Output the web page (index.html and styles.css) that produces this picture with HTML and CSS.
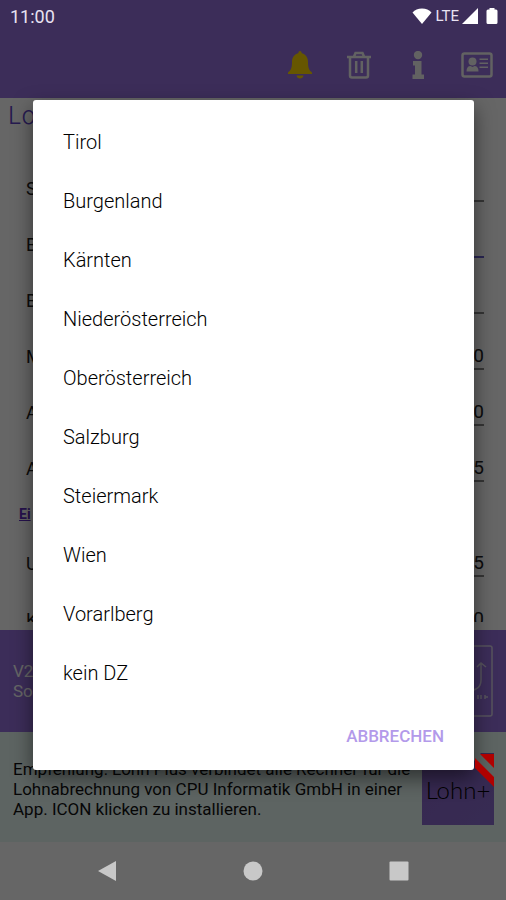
FILE: index.html
```html
<!DOCTYPE html>
<html lang="de">
<head>
<meta charset="utf-8">
<meta name="viewport" content="width=device-width, initial-scale=1">
<title>Lohn</title>
<link rel="stylesheet" href="styles.css">
</head>
<body>
<div class="screen">
  <header class="top">
    <div class="status">
      <span class="clock">11:00</span>
      <span class="signals">
        <svg width="20" height="18" viewBox="0 0 20 18"><path d="M10 17 .5 5.500Q4 1.500 10 1.500t9.500 4z"/></svg>
        <span class="lte">LTE</span>
        <svg width="16" height="18" viewBox="0 0 16 18"><path d="M16 1v16H0z"/></svg>
        <svg class="battery" width="12" height="18" viewBox="0 0 12 18"><path d="M3.500 1h5v1.500H10q1.500 0 1.500 1.500v11.500Q11.500 17 10 17H2Q.5 17 .5 15.500V4Q.5 2.500 2 2.500h1.500z"/></svg>
      </span>
    </div>
    <nav class="toolbar">
      <button class="tool bell" aria-label="Alarm"><svg width="26" height="28" viewBox="0 0 26 28"><path d="M13 0q1.500 0 1.800 2.300C19 3.500 21 7 21 11c0 6 1 8 4 10.500V23H1v-1.500C4 19 5 17 5 11c0-4 2-7.500 6.200-8.700Q11.500 0 13 0zM9.500 24.500h7q-.5 3-3.500 3t-3.500-3z"/></svg></button>
      <button class="tool" aria-label="Löschen"><svg width="26" height="28" viewBox="0 0 26 28" class="outline"><path d="M1 6h24M8 5.500 9.500 2h7L18 5.500M4 6v18.500q0 2 2 2h14q2 0 2-2V6M10.200 10v12M15.800 10v12"/></svg></button>
      <button class="tool" aria-label="Info"><svg width="26" height="28" viewBox="0 0 26 28"><circle cx="13" cy="4" r="4.200"/><path d="M8 10h8.500v13.500H19V28H7.500v-4.500H10v-9H8z"/></svg></button>
      <button class="tool card" aria-label="Kontakt"><svg width="32" height="28" viewBox="0 0 32 28"><rect class="frame" x="1.500" y="2.500" width="29" height="23" rx="2"/><circle cx="11.500" cy="10.500" r="4"/><path d="M5.500 20.500q0-5.500 4-5.500l2 1 2-1q4 0 4 5.500zM18.500 7.500H27V9h-8.500zM18.500 11.500H27V13h-8.500zM18.500 15.500H27V17h-8.500z"/></svg></button>
    </nav>
  </header>

  <main class="content">
    <h1>Lo</h1>
    <form class="form">
      <div class="row"><label for="f1">S</label><input id="f1"></div>
      <div class="row active"><label for="f2">B</label><input id="f2"></div>
      <div class="row"><label for="f3">B</label><input id="f3"></div>
      <div class="row"><label for="f4">M</label><input id="f4" value="0"></div>
      <div class="row"><label for="f5">A</label><input id="f5" value="0"></div>
      <div class="row"><label for="f6">A</label><input id="f6" value="5"></div>
      <a class="more" href="#">Ei</a>
      <div class="row"><label for="f7">U</label><input id="f7" value="5"></div>
      <div class="row"><label for="f8">K</label><input id="f8" value="0"></div>
    </form>
  </main>

  <section class="about">
    <p>V2<br>So</p>
    <svg width="72" height="72" viewBox="0 0 72 72"><rect x="1" y="1" width="70" height="70" rx="2"/><path d="M46 43q4 4 9 1 5-2 5-9V19m-4 3 4-4 5 4M57 50v4m3-4v4m4-4v4m0-2h3"/></svg>
  </section>

  <section class="promo">
    <p>Empfehlung: Lohn Plus verbindet alle Rechner für die Lohnabrechnung von CPU Informatik GmbH in einer App. ICON klicken zu installieren.</p>
    <a class="app" href="#">
      <svg width="72" height="72" viewBox="0 0 72 72" aria-hidden="true"><path class="white" d="M45 0h13l14 14v13z"/></svg>
      <svg class="ribbon" width="72" height="72" viewBox="0 0 72 72" aria-hidden="true"><path class="red" d="M58 1h14v14zM53 5l19 19v10L53 15z"/></svg>
      <span>Lohn+</span>
    </a>
  </section>

  <nav class="system">
    <button aria-label="Zurück"><svg width="20" height="22" viewBox="0 0 20 22"><path d="M19 1v20L1 11z"/></svg></button>
    <button aria-label="Start"><svg width="20" height="22" viewBox="0 0 20 22"><circle cx="10" cy="11" r="9.500"/></svg></button>
    <button aria-label="Übersicht"><svg width="20" height="22" viewBox="0 0 20 22"><rect x=".5" y="1.500" width="19" height="19" rx="1"/></svg></button>
  </nav>

  <div class="scrim">
    <div class="dialog" role="dialog" aria-label="Bundesland">
      <ul>
        <li><button>Tirol</button></li>
        <li><button>Burgenland</button></li>
        <li><button>Kärnten</button></li>
        <li><button>Niederösterreich</button></li>
        <li><button>Oberösterreich</button></li>
        <li><button>Salzburg</button></li>
        <li><button>Steiermark</button></li>
        <li><button>Wien</button></li>
        <li><button>Vorarlberg</button></li>
        <li><button>kein DZ</button></li>
      </ul>
      <div class="actions"><button>ABBRECHEN</button></div>
    </div>
  </div>
</div>
</body>
</html>
```
FILE: styles.css
```css
* { box-sizing: border-box; }
body {
  margin: 0;
  font-family: Roboto, "Liberation Sans", sans-serif;
  background: #fff;
}
button {
  border: 0;
  padding: 0;
  background: none;
  font: inherit;
  color: inherit;
}
svg { display: block; fill: currentColor; }
.screen {
  position: relative;
  display: flex;
  flex-direction: column;
  min-height: 100vh;
}

/* Header */
.top { background: #9670de; }
.status {
  position: relative;
  z-index: 2;
  display: flex;
  justify-content: space-between;
  align-items: center;
  height: 32px;
  padding: 0 8px 0 10px;
  color: #fff;
}
.clock { font-size: 18px; color: #e8e2f2; }
.signals { display: flex; align-items: center; gap: 3px; }
.signals .battery { margin-left: 5px; }
.lte { font-size: 15px; color: #e8e2f2; }
.toolbar {
  display: flex;
  justify-content: flex-end;
  align-items: center;
  gap: 33px;
  height: 66px;
  padding-right: 13px;
  color: #f4f4f4;
}
.tool.bell { color: #ffd800; }
.tool.card { margin-left: -3px; }
.outline { fill: none; stroke: currentColor; stroke-width: 2.500; }
.frame { fill: none; stroke: currentColor; stroke-width: 2.500; }

/* Form */
.content {
  flex: 1 0 532px;
  display: flex;
  flex-direction: column;
  height: 532px;
  padding-bottom: 8px;
}
h1 {
  flex: none;
  margin: 0;
  padding: 4px 8px;
  height: 58px;
  font-family: Inter, sans-serif;
  font-size: 24px;
  font-weight: 300;
  line-height: 28px;
  color: #5f45c8;
}
.form {
  flex: 1 1 0;
  min-height: 0;
  overflow: hidden;
  padding: 0 22px 0 26px;
}
.row {
  display: flex;
  justify-content: space-between;
  align-items: center;
  height: 56px;
  padding-bottom: 4px;
  font-size: 18px;
  color: #222;
}
.row label { padding-top: 12px; }
.row input {
  width: 60%;
  height: 40px;
  padding: 12px 0 0;
  border: 0;
  border-bottom: 2px solid #888;
  background: none;
  font: inherit;
  font-size: 19px;
  text-align: right;
  color: #222;
}
.row.active input { border-color: #6a5fd0; }
.more {
  display: block;
  height: 39px;
  margin-left: -7px;
  padding-top: 14px;
  font-size: 14px;
  font-weight: 700;
  line-height: 16px;
  color: #5f2fc0;
}

/* Footer */
.about {
  display: flex;
  justify-content: space-between;
  align-items: center;
  height: 102px;
  padding: 0 13px;
  background: #9670de;
  color: #fff;
}
p { margin: 0; font-size: 17px; line-height: 20px; }
.about svg { fill: none; stroke: #d8d0e8; stroke-width: 1.500; }
.promo {
  display: flex;
  justify-content: space-between;
  align-items: center;
  gap: 8px;
  height: 110px;
  padding: 4px 12px 0 13px;
  background: #e8f9f6;
  color: #111;
}
.app {
  position: relative;
  flex: none;
  display: flex;
  align-items: center;
  justify-content: center;
  width: 72px;
  height: 72px;
  background: linear-gradient(135deg, #8a66c8, #8b6cd0);
  color: #000;
  font-family: Lato, sans-serif;
  font-size: 24px;
  font-weight: 300;
  text-decoration: none;
}
.app svg { position: absolute; inset: 0; }
.app .ribbon { z-index: 2; }
.app span { position: relative; }
.red { fill: #b00000; }
.white { fill: #e8f9f6; }
.system {
  position: relative;
  z-index: 2;
  display: flex;
  justify-content: center;
  align-items: center;
  gap: 126px;
  height: 58px;
  color: #c8c8c8;
}

/* Dialog */
.scrim {
  position: absolute;
  inset: 0;
  z-index: 1;
  padding: 100px 32px 0 33px;
  background: rgba(0, 0, 0, 0.6);
}
.dialog {
  padding-top: 12px;
  border-radius: 3px;
  background: #fff;
  box-shadow: 0 8px 20px rgba(0, 0, 0, 0.5);
}
ul { margin: 0; padding: 0; list-style: none; }
li button {
  display: block;
  width: 100%;
  height: 59px;
  padding: 0 30px;
  font-size: 20px;
  font-weight: 300;
  text-align: left;
  color: #000;
}
.actions {
  display: flex;
  justify-content: flex-end;
  align-items: center;
  height: 68px;
  padding-right: 30px;
}
.actions button { font-size: 17px; font-weight: 500; color: #b39aea; }
```
